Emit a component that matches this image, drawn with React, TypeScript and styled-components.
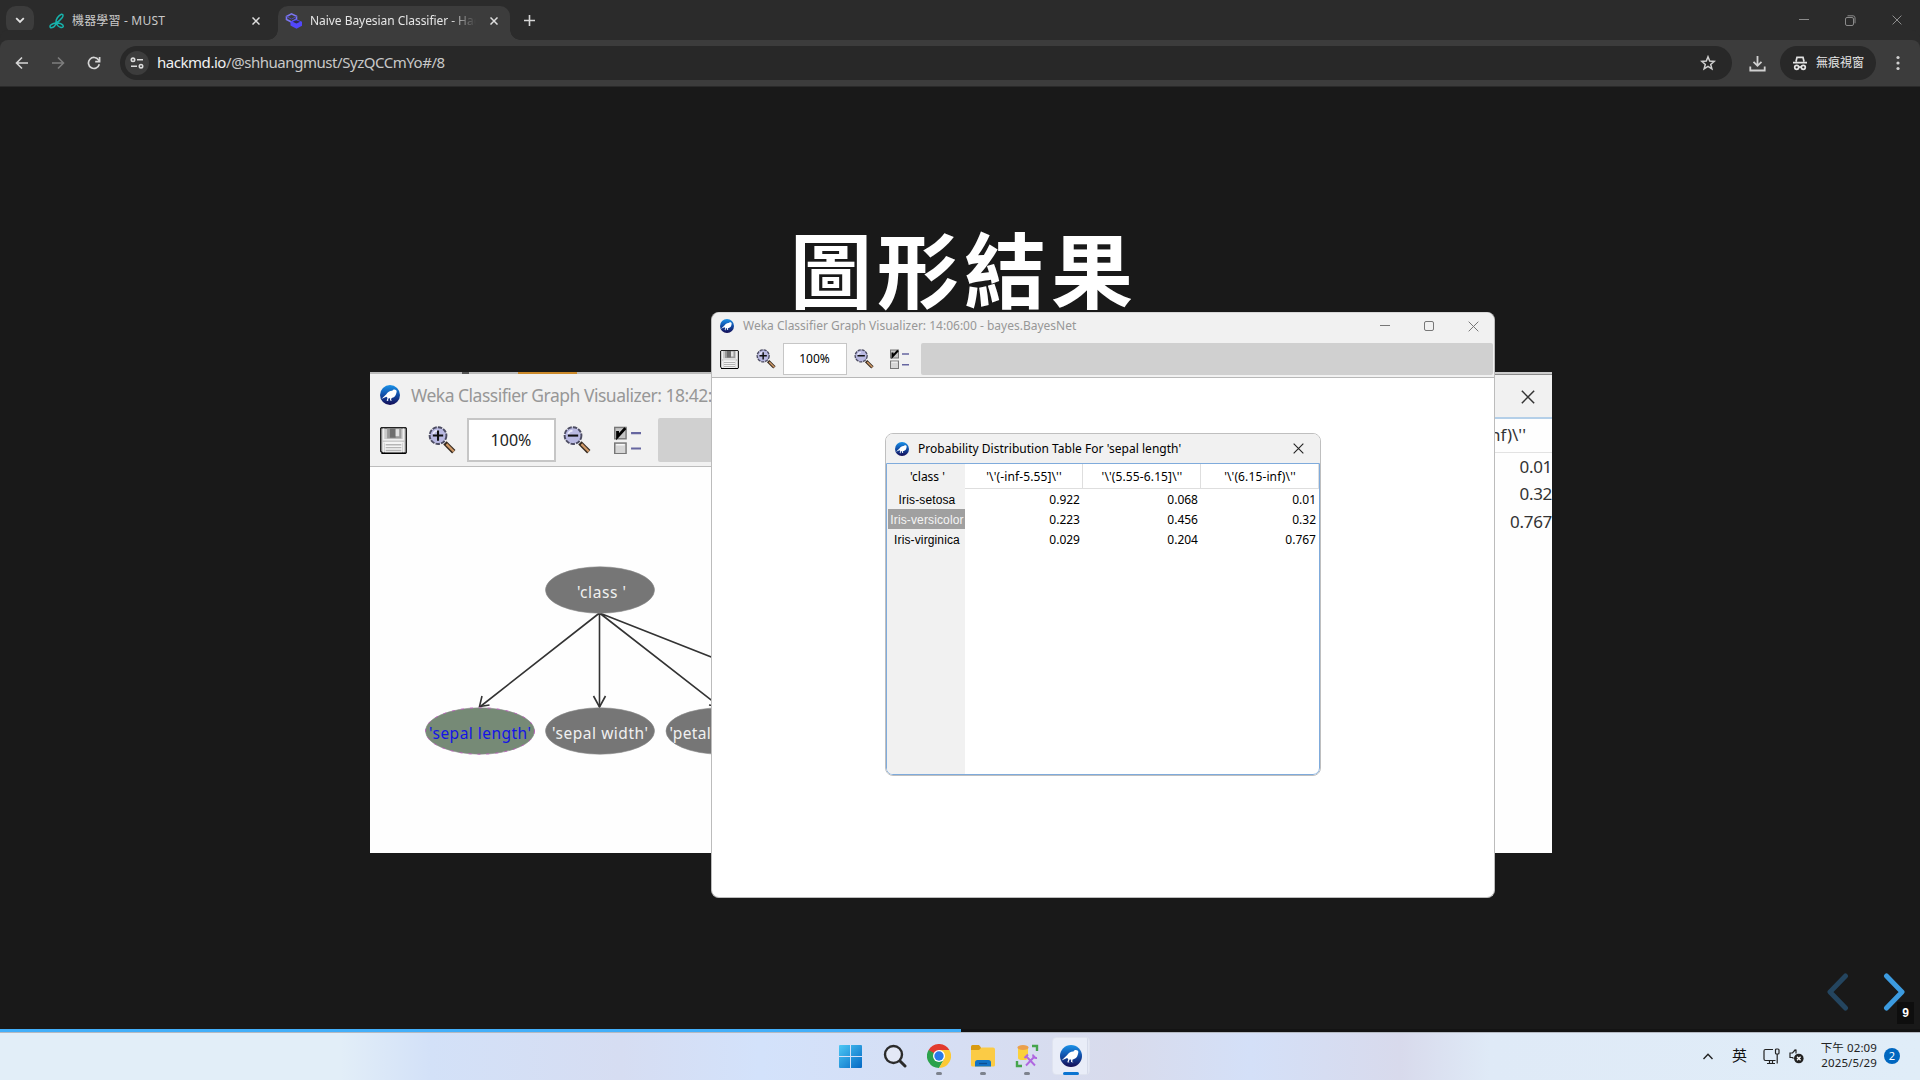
import React from "react";
import styled, { createGlobalStyle } from "styled-components";

const ui = `"Noto Sans", "Noto Sans CJK TC", sans-serif`;

const Global = createGlobalStyle`
  body { margin: 0; background: #191919; overflow: hidden; }
  * { box-sizing: border-box; }
  svg { display: block; flex: none; }
`;

const Screen = styled.div`
  position: relative;
  width: 1920px;
  height: 1080px;
  display: flex;
  flex-direction: column;
  overflow: hidden;
  font-family: ${ui};
`;

const Text = styled.span<{ $size: number; $color?: string; $ls?: number }>`
  font-size: ${(p) => p.$size}px;
  color: ${(p) => p.$color ?? "#000"};
  letter-spacing: ${(p) => p.$ls ?? 0}px;
  line-height: 1.3;
  white-space: pre;
`;

const Spacer = styled.div`
  flex: 1;
`;

/* ---------- browser chrome ---------- */
const TabStrip = styled.div`
  height: 40px;
  background: #2b2b2b;
  display: flex;
  align-items: center;
  padding: 0 18px 0 6px;
`;
const TabSearch = styled.div`
  width: 28px;
  height: 28px;
  border-radius: 10px;
  background: #3c3c3c;
  display: grid;
  place-items: center;
`;
const Tab = styled.div<{ $active?: boolean }>`
  position: relative;
  width: ${(p) => (p.$active ? 232 : 236)}px;
  height: 34px;
  margin-top: 6px;
  margin-left: ${(p) => (p.$active ? 0 : 8)}px;
  padding: 0 ${(p) => (p.$active ? 12 : 18)}px 5px 7px;
  border-radius: 10px 10px 0 0;
  background: ${(p) => (p.$active ? "#3c3c3c" : "transparent")};
  display: flex;
  align-items: center;
  &::before,
  &::after {
    content: "";
    display: ${(p) => (p.$active ? "block" : "none")};
    position: absolute;
    bottom: 0;
    width: 10px;
    height: 10px;
  }
  &::before {
    left: -10px;
    background: radial-gradient(circle at 0 0, transparent 9.5px, #3c3c3c 10px);
  }
  &::after {
    right: -10px;
    background: radial-gradient(circle at 100% 0, transparent 9.5px, #3c3c3c 10px);
  }
`;
const TabTitle = styled.div<{ $fade?: boolean }>`
  flex: 1;
  overflow: hidden;
  display: flex;
  margin: 0 ${(p) => (p.$fade ? 14 : 10)}px 0 7px;
  mask-image: ${(p) => (p.$fade ? "linear-gradient(90deg,#000 84%,transparent)" : "none")};
`;
const NewTab = styled.div`
  margin-left: 14px;
`;
const WindowButtons = styled.div<{ $gap: number; $shift?: number }>`
  display: flex;
  gap: ${(p) => p.$gap}px;
  align-items: center;
  margin-right: ${(p) => p.$shift ?? 0}px;
`;
const Toolbar = styled.div`
  height: 47px;
  background: #3c3c3c;
  border-bottom: 1px solid #2a2a2a;
  border-radius: 8px 8px 0 0;
  box-shadow: 0 -10px 0 #2b2b2b;
  display: flex;
  align-items: center;
  padding: 0 14px 0 15px;
`;
const NavIcons = styled.div`
  width: 105px;
  display: flex;
  gap: 22px;
`;
const Omnibox = styled.div`
  width: 1613px;
  height: 34px;
  border-radius: 17px;
  background: #282828;
  display: flex;
  align-items: center;
  padding: 0 16px 0 5px;
`;
const SiteInfo = styled.div`
  width: 24px;
  height: 24px;
  border-radius: 50%;
  background: #3c3c3c;
  display: grid;
  place-items: center;
  margin-right: 8px;
`;
const Download = styled.svg`
  margin-left: 17px;
`;
const Incognito = styled.div`
  width: 96px;
  height: 34px;
  border-radius: 17px;
  background: #282828;
  display: flex;
  align-items: center;
  gap: 8px;
  padding-left: 12px;
  margin: 0 14px 0 14px;
`;

/* ---------- slide ---------- */
const Page = styled.main`
  position: relative;
  height: 942px;
  background: #191919;
  display: flex;
  flex-direction: column;
  align-items: center;
`;
const Heading = styled.h1`
  margin: 125px 0 0 8px;
  height: 160px;
  font: 700 82px/110px "Noto Sans CJK TC", sans-serif;
  letter-spacing: 5px;
  color: #fff;
`;
const Slide = styled.div`
  width: 1182px;
  height: 481px;
  background: #fefefe;
  margin-left: 2px;
  display: flex;
  justify-content: space-between;
  overflow: hidden;
`;
const SlideLeft = styled.div`
  width: 346px;
`;
const SlideEdge = styled.div`
  height: 2px;
  background: linear-gradient(90deg, #bbb 92px, #555 92px 99px, #bbb 99px 148px, #cc8a2b 148px 207px, #bbb 207px);
`;
const SlideTitle = styled.div`
  height: 42px;
  background: #f1f1f1;
  display: flex;
  align-items: center;
  padding-left: 10px;
  gap: 11px;
`;
const SlideTools = styled.div`
  height: 51px;
  background: #f1f1f1;
  border-bottom: 1px solid #bdbdbd;
  display: flex;
  align-items: flex-start;
  padding: 2px 0 0 10px;
`;
const ZoomField = styled.div<{ $w: number; $h: number }>`
  width: ${(p) => p.$w}px;
  height: ${(p) => p.$h}px;
  padding-right: 1px;
  background: #fff;
  border: ${(p) => (p.$h > 40 ? 2 : 1)}px solid #c6c6c6;
  display: grid;
  place-items: center;
`;
const ToolSlot = styled.div<{ $w: number; $h: number; $pad?: number }>`
  width: ${(p) => p.$w}px;
  height: ${(p) => p.$h}px;
  padding-left: ${(p) => p.$pad ?? 0}px;
  display: flex;
  align-items: center;
`;
const GrayBar = styled.div<{ $h: number }>`
  flex: 1;
  height: ${(p) => p.$h}px;
  background: #d0d0d0;
  border-radius: 2px;
`;
const SlideRight = styled.div`
  width: 60px;
`;
const RightTitle = styled.div`
  height: 47px;
  border-top: 2px solid #ccc;
  background: linear-gradient(#8a8a8a 1px, #f1f1f1 1px);
  border-bottom: 2px solid #b4cfe8;
  display: flex;
  align-items: center;
  padding: 2px 0 0 29px;
`;
const RightHead = styled.div`
  height: 34px;
  border-bottom: 1px solid #e2e2e2;
  display: flex;
  align-items: center;
  justify-content: flex-end;
  padding-right: 26px;
`;
const RightRow = styled.div`
  height: 27.5px;
  display: flex;
  align-items: center;
  justify-content: flex-end;
`;

const SlideNav = styled.div`
  position: absolute;
  right: 15px;
  bottom: 18px;
  display: flex;
  gap: 34px;
`;
const PageNumber = styled.div`
  position: absolute;
  right: 6px;
  bottom: 5px;
  width: 17px;
  height: 22px;
  background: #0e0e0e;
  color: #fff;
  font: 700 12px/22px "Liberation Sans", sans-serif;
  text-align: center;
`;
const Progress = styled.div`
  height: 3px;
  background: #131313;
  &::before {
    content: "";
    display: block;
    width: 961px;
    height: 3px;
    background: #42affa;
  }
`;

/* ---------- windows over the page ---------- */
const AppWindow = styled.section`
  position: absolute;
  left: 711px;
  top: 312px;
  width: 784px;
  height: 586px;
  border: 1px solid #bcbcbc;
  border-top-color: #d8d8d8;
  border-radius: 8px;
  background: #fff;
  overflow: hidden;
`;
const AppTitle = styled.header`
  height: 29px;
  background: #f1f1f1;
  display: flex;
  align-items: center;
  gap: 9px;
  padding: 0 16px 3px 8px;
`;
const AppTools = styled.div`
  height: 36px;
  background: #f1f1f1;
  border-bottom: 1px solid #b8b8b8;
  display: flex;
  padding: 1px 1px 0 8px;
`;
const Dialog = styled.section`
  position: absolute;
  left: 885px;
  top: 433px;
  width: 436px;
  height: 343px;
  border: 1px solid #bfbfbf;
  border-radius: 8px;
  background: #fff;
  overflow: hidden;
  display: flex;
  flex-direction: column;
`;
const DialogTitle = styled.header`
  height: 29px;
  background: #f1f1f1;
  display: flex;
  align-items: center;
  padding: 0 16px 0 9px;
  gap: 9px;
`;
const TableBox = styled.div`
  flex: 1;
  border: 1px solid #7fabdc;
  border-radius: 0 0 7px 7px;
  display: flex;
  overflow: hidden;
`;
const RowHeads = styled.div`
  width: 78px;
  background: #f1f1f1;
  display: flex;
  flex-direction: column;
`;
const CornerCell = styled.div`
  height: 25px;
  padding-left: 3px;
  display: grid;
  place-items: center;
`;
const RowHead = styled.div<{ $on?: boolean }>`
  height: 20px;
  margin-left: 1px;
  padding-left: 1px;
  background: ${(p) => (p.$on ? "#a0a0a0" : "transparent")};
  color: ${(p) => (p.$on ? "#f4f4f4" : "#000")};
  font: 12px/22px "Liberation Sans", sans-serif;
  letter-spacing: 0.13px;
  text-align: center;
  white-space: nowrap;
`;
const Column = styled.div<{ $last?: boolean }>`
  flex: ${(p) => (p.$last ? "1" : "0 0 118px")};
  display: flex;
  flex-direction: column;
`;
const ColumnHead = styled.div`
  height: 25px;
  padding: 2px 0 0 1px;
  border-right: 1px solid #dedede;
  border-bottom: 1px solid #dedede;
  display: grid;
  place-items: center;
`;
const Cell = styled.div`
  height: 20px;
  display: flex;
  align-items: center;
  justify-content: flex-end;
  padding: 2px 3px 0 0;
`;

/* ---------- taskbar ---------- */
const Taskbar = styled.footer`
  height: 48px;
  border-top: 1px solid #b4b9c2;
  background: linear-gradient(90deg, #e2eef8 0, #e2eef8 340px, #d3e1f8 430px, #d6ddf2 620px, #d3e2fb 760px, #d6def3 960px, #d8dbec 1120px, #d4e0f8 1250px, #d8daec 1400px, #dfeaf7 1490px, #e0edf8 100%);
  display: flex;
  align-items: stretch;
`;
const Apps = styled.div`
  display: flex;
  margin-left: 829px;
`;
const AppButton = styled.div<{ $state?: "idle" | "open" | "active" }>`
  position: relative;
  width: 44px;
  padding-bottom: 1px;
  display: flex;
  justify-content: center;
  align-items: center;
  &::after {
    content: "";
    display: ${(p) => (p.$state && p.$state !== "idle" ? "block" : "none")};
    position: absolute;
    bottom: 5px;
    width: ${(p) => (p.$state === "active" ? 16 : 6)}px;
    height: 3px;
    border-radius: 2px;
    background: ${(p) => (p.$state === "active" ? "#0a74d1" : "#7d828d")};
  }
`;
const ActiveTile = styled.div`
  width: 38px;
  height: 38px;
  border-radius: 4px;
  background: linear-gradient(90deg, #e9edf8 34px, #d6dbea 34px 35px, #e4e8f5 35px);
  border: 1px solid #dfe3ef;
  display: grid;
  place-items: center;
`;
const Tray = styled.div`
  display: flex;
  align-items: center;
  padding: 0 20px 1px 0;
`;
const TrayIcon = styled.svg<{ $l?: number; $r?: number }>`
  margin-left: ${(p) => p.$l ?? 0}px;
  margin-right: ${(p) => p.$r ?? 0}px;
`;
const Clock = styled.div`
  width: 68px;
  margin: 0 7px 0 5px;
  display: flex;
  flex-direction: column;
  align-items: flex-end;
`;
const Badge = styled.div`
  width: 16px;
  height: 16px;
  border-radius: 50%;
  background: #0067c0;
  color: #fff;
  font: 11px/16px ${ui};
  text-align: center;
`;

/* ---------- drawings ---------- */
type IconProps = { size?: number; color?: string };

const Cross = ({ size = 10, color = "#dedede", w = 1.5 }: IconProps & { w?: number }) => (
  <svg width={size} height={size} viewBox="0 0 10 10" stroke={color} strokeWidth={(w * 10) / size} fill="none">
    <path d="M.6.6 9.4 9.4M9.4.6.6 9.4" />
  </svg>
);
const Minus = ({ color = "#8a8a8a" }: IconProps) => (
  <svg width="10" height="10" stroke={color} fill="none">
    <path d="M0 4.5h10" />
  </svg>
);
const Square = ({ color = "#777" }: IconProps) => (
  <svg width="10" height="10" stroke={color} fill="none">
    <rect x=".5" y=".5" width="9" height="9" rx="1.5" />
  </svg>
);
const Restore = () => (
  <svg width="11" height="11" stroke="#8a8a8a" fill="none">
    <rect x=".5" y="2.5" width="8" height="8" rx="1.5" />
    <path d="M2.5.8H8a2 2 0 0 1 2 2v5.5" />
  </svg>
);

const Weka = ({ size = 14 }: IconProps) => (
  <svg width={size} height={size} viewBox="0 0 22 22">
    <defs>
      <linearGradient id="weka" x1="0" y1="0" x2="0" y2="1">
        <stop offset="0" stopColor="#1a92e8" />
        <stop offset=".45" stopColor="#1254ae" />
        <stop offset="1" stopColor="#140c55" />
      </linearGradient>
    </defs>
    <circle cx="11" cy="11" r="11" fill="url(#weka)" />
    <path d="M1.5 15.5 7 10.2C8.500 7.600 11 6.200 13.500 6.400c.8-1.400 2.800-1.900 4-.8.9.7 1 1.500.7 2.500-.4 1.500-.6 3.200-1.800 4.400-1.100 1.200-2.600 1.700-3.800 2l-.4 2 1.300.9-2.500-.3.100-2.500-1.500-.1-.9 2.200.9.900-2.300-.4 1-3-1.200-1.300z" fill="#fff" />
  </svg>
);

const Floppy = ({ size = 19 }: IconProps) => (
  <svg width={size} height={size} viewBox="0 0 19 19">
    <path d="M1 .5h17l.5.5v17l-.5.5H2L.5 17V1z" fill="#c9c9c9" stroke="#222" />
    <rect x="5" y="1" width="10" height="7" fill="#999" />
    <rect x="7" y="1" width="4" height="6.500" fill="#6d6d6d" />
    <rect x="11" y="1.500" width="2.500" height="5" fill="#e0e0e0" />
    <path d="M2.500 1v8h14V1M2.500 18v-7h14v7" fill="none" stroke="#eee" />
    <rect x="3.500" y="10.500" width="12" height="7.500" fill="#f4f4f4" />
    <path d="M4 12.500h11M4 14.500h11M4 16.500h11" stroke="#b5b5b5" />
    <path d="M1 18.500h17" stroke="#000" />
  </svg>
);
const Lens = ({ size = 20, plus }: IconProps & { plus?: boolean }) => (
  <svg width={size} height={size} viewBox="0 0 19 19" fill="none">
    <path d="m11.500 11.500 6 6" stroke="#35291f" strokeWidth="3.200" />
    <path d="m12.500 12.300 5 5" stroke="#d09a68" strokeWidth="1.500" />
    <circle cx="6.800" cy="6.500" r="5.700" fill="#b9b9e2" stroke="#4c4c62" strokeWidth="1.300" strokeDasharray="3 .8" />
    <path d="M3.500 5.500c.4-1.500 1.500-2.200 3-2.300" stroke="#e9e9fb" strokeWidth="1.200" />
    <path d={plus ? "M3.300 6.500h7M6.800 3v7" : "M3.300 6.500h7"} stroke="#111" strokeWidth="1.400" />
  </svg>
);
const CheckList = ({ size = 19 }: IconProps) => (
  <svg width={size} height={(size * 20) / 19} viewBox="0 0 19 20" fill="none">
    <rect x=".5" y="1" width="8" height="8" fill="#c4c4c4" stroke="#777" />
    <path d="M2.500 3.500v4l5.500-6" stroke="#000" strokeWidth="2" />
    <rect x=".5" y="12" width="8" height="7.500" fill="#d6d6d6" stroke="#777" />
    <path d="M1.500 13.200h6" stroke="#f7f7f7" />
    <path d="M12 5h7M12 15.800h7" stroke="#6666a0" strokeWidth="1.500" />
  </svg>
);

const Graph = () => (
  <svg width="346" height="386" viewBox="370 467 346 386">
    <g stroke="#333" strokeWidth="1.600" fill="none">
      <path d="M599.500 613 481 706M599.500 613v94M599.500 613 719 706M599.500 613 838 707" />
      <path d="m482 696-2.500 10.500 10-1.500M593.500 696l6 11 6-11M709 705l10 1.500-3-10" />
    </g>
    <g fill="#767676" stroke="#8a8a8a" strokeWidth=".6">
      <ellipse cx="600" cy="590" rx="54.500" ry="23.200" />
      <ellipse cx="600" cy="731" rx="54.500" ry="23.200" />
      <ellipse cx="720.500" cy="731" rx="54.500" ry="23.200" />
      <ellipse cx="480" cy="731" rx="54.500" ry="23.200" fill="#768a76" />
      <ellipse cx="480" cy="731" rx="54.500" ry="23.200" fill="none" stroke="#c050c0" strokeWidth=".8" strokeDasharray="3 6" />
    </g>
    <g fontFamily={ui} fontSize="15.500" fill="#f0f0f0">
      <text x="577" y="598" textLength="49">'class '</text>
      <text x="552" y="738.500" textLength="96">'sepal width'</text>
      <text x="669.500" y="738.500" textLength="98">'petal length'</text>
      <text x="429" y="738.500" fill="#1414e6" textLength="102">'sepal length'</text>
    </g>
  </svg>
);

const Back = ({ flip, color = "#d6d6d6" }: IconProps & { flip?: boolean }) => (
  <svg width="14" height="14" viewBox="0 0 14 14" fill="none" stroke={color} strokeWidth="1.600">
    <path d={flip ? "M1 7h11M7 1.500 12.500 7 7 12.500" : "M13 7H2M7 1.500 1.500 7 7 12.500"} />
  </svg>
);
const Reload = () => (
  <svg width="14" height="14" viewBox="0 0 14 14" fill="none" stroke="#d6d6d6" strokeWidth="1.700">
    <path d="M12.300 8.300A5.500 5.500 0 1 1 11.600 4l.9 1.300" />
    <path d="M12.600 1v4.600H8.200" />
  </svg>
);

const columns = [
  { head: "'\\'(-inf-5.55]\\''", cells: ["0.922", "0.223", "0.029"] },
  { head: "'\\'(5.55-6.15]\\''", cells: ["0.068", "0.456", "0.204"] },
  { head: "'\\'(6.15-inf)\\''", cells: ["0.01", "0.32", "0.767"] },
];
const rows = ["Iris-setosa", "Iris-versicolor", "Iris-virginica"];

const BrowserChrome = () => (
  <>
    <TabStrip>
      <TabSearch>
        <svg width="10" height="7" fill="none" stroke="#e3e3e3" strokeWidth="1.800">
          <path d="m1.200 1.200 3.800 3.800 3.800-3.800" />
        </svg>
      </TabSearch>
      <Tab>
        <svg width="16" height="16" viewBox="0 0 16 16" fill="none" stroke="#17b3ac" strokeWidth="1.500">
          <path d="M7 10C6.300 6.500 9.500 2.500 12.500 1.300c2-.3 1.800 2 .6 3.500C11 7.500 9.500 9 7 10zM7 10c-.5 2.500-2.500 4.500-4.700 4.700-1.800 0-1.600-2-.1-3C3.500 10.700 5.200 10 7 10zM7 10c2.500-.2 5.500.4 7 2.300.8 1.400-.4 2.600-2 2.200C9.700 14 8 12 7 10z" />
        </svg>
        <TabTitle>
          <Text $size={12} $color="#c9c9c9" $ls={0.18}>機器學習 - MUST</Text>
        </TabTitle>
        <Cross size={8} />
      </Tab>
      <Tab $active>
        <svg width="18" height="18" viewBox="0 0 18 18">
          <path d="M1.500 4.500 6.500 1.800 11.500 4.300v3L6.500 10 1.500 7.500z" fill="none" stroke="#7a75ee" strokeWidth="1.600" />
          <path d="m1.500 4.500 5 2.500 5-2.500" fill="none" stroke="#4a45b8" />
          <path d="M5.500 9.500 11 7.300l6 2.500v4L11.500 16.800 5.500 13.500z" fill="#5247fb" />
          <path d="m7.600 9.800 3.600-1.500 4 1.500-3.800 1.700z" fill="#2d2b4a" />
        </svg>
        <TabTitle $fade>
          <Text $size={12} $color="#e6e6e6" $ls={-0.05}>Naive Bayesian Classifier - HackMD</Text>
        </TabTitle>
        <Cross size={8} />
      </Tab>
      <NewTab>
        <svg width="11" height="11" stroke="#d6d6d6" strokeWidth="1.600">
          <path d="M5.500 0v11M0 5.500h11" />
        </svg>
      </NewTab>
      <Spacer />
      <WindowButtons $gap={36}>
        <Minus />
        <Restore />
        <Cross size={10} w={1} color="#8f8f8f" />
      </WindowButtons>
    </TabStrip>
    <Toolbar>
      <NavIcons>
        <Back />
        <Back flip color="#7d7d7d" />
        <Reload />
      </NavIcons>
      <Omnibox>
        <SiteInfo>
          <svg width="14" height="12" viewBox="0 0 14 12" fill="none" stroke="#dcdcdc" strokeWidth="1.600">
            <circle cx="3" cy="2.800" r="1.700" />
            <path d="M7 2.800h6M1 9.200h6" />
            <circle cx="11" cy="9.200" r="1.700" />
          </svg>
        </SiteInfo>
        <Text $size={15} $color="#f1f1f1" $ls={-0.45}>hackmd.io</Text>
        <Text $size={15} $color="#c8c8c8" $ls={-0.45}>/@shhuangmust/SyzQCCmYo#/8</Text>
        <Spacer />
        <svg width="16" height="16" viewBox="0 0 16 16" fill="none" stroke="#cfcfcf" strokeWidth="1.500">
          <path d="m8 1.800 1.700 4.300 4.500.3-3.500 3 1.200 4.500L8 11.400l-3.900 2.500 1.200-4.500-3.500-3 4.500-.3z" />
        </svg>
      </Omnibox>
      <Download width="17" height="17" viewBox="0 0 17 17" fill="none" stroke="#d0d0d0" strokeWidth="1.800">
        <path d="M8.500 1v9.500M4.500 6.800l4 4 4-4M1.300 11.500v4h14.400v-4" />
      </Download>
      <Incognito>
        <svg width="16" height="15" viewBox="0 0 16 15" fill="none" stroke="#e3e3e3" strokeWidth="1.700">
          <path d="M4 5.500 5 1.300h6l1 4.200M1 6.600h14" />
          <circle cx="4.700" cy="11.300" r="2" />
          <circle cx="11.300" cy="11.300" r="2" />
          <path d="M6.700 11h2.600" />
        </svg>
        <Text $size={12} $color="#e6e6e6">無痕視窗</Text>
      </Incognito>
      <svg width="16" height="16" fill="#d0d0d0">
        <circle cx="8" cy="2.500" r="1.600" />
        <circle cx="8" cy="8" r="1.600" />
        <circle cx="8" cy="13.500" r="1.600" />
      </svg>
    </Toolbar>
  </>
);

const SlideView = () => (
  <Page>
    <Heading>圖形結果</Heading>
    <Slide>
      <SlideLeft>
        <SlideEdge />
        <SlideTitle>
          <Weka size={20} />
          <Text $size={17.5} $color="#979797" $ls={-0.5}>Weka Classifier Graph Visualizer: 18:42:</Text>
        </SlideTitle>
        <SlideTools>
          <ToolSlot $w={48} $h={44}><Floppy size={27} /></ToolSlot>
          <ToolSlot $w={39} $h={44}><Lens size={28} plus /></ToolSlot>
          <ZoomField $w={89} $h={44}><Text $size={16} $color="#222">100%</Text></ZoomField>
          <ToolSlot $w={58} $h={44} $pad={7}><Lens size={28} /></ToolSlot>
          <ToolSlot $w={44} $h={44}><CheckList size={27} /></ToolSlot>
          <GrayBar $h={44} />
        </SlideTools>
        <Graph />
      </SlideLeft>
      <SlideRight>
        <RightTitle><Cross size={14} w={1.5} color="#333" /></RightTitle>
        <RightHead><Text $size={17} $color="#333">{"nf)\\''"}</Text></RightHead>
        {columns[2].cells.map((v) => (
          <RightRow key={v}><Text $size={17} $color="#333" $ls={-0.3}>{v}</Text></RightRow>
        ))}
      </SlideRight>
    </Slide>
    <SlideNav>
      <svg width="22" height="38" fill="none" stroke="#24455f" strokeWidth="5" strokeLinecap="round" strokeLinejoin="round">
        <path d="M18.500 3 3 19l15.500 16" />
      </svg>
      <svg width="22" height="38" fill="none" stroke="#3c9be0" strokeWidth="5" strokeLinecap="round" strokeLinejoin="round">
        <path d="M3.500 3 19 19 3.500 35" />
      </svg>
    </SlideNav>
    <PageNumber>9</PageNumber>
  </Page>
);

const WekaWindow = () => (
  <AppWindow>
    <AppTitle>
      <Weka size={14} />
      <Text $size={12} $color="#979797">Weka Classifier Graph Visualizer: 14:06:00 - bayes.BayesNet</Text>
      <Spacer />
      <WindowButtons $gap={34} $shift={-1}>
        <Minus color="#777" />
        <Square />
        <Cross size={11} w={1} color="#777" />
      </WindowButtons>
    </AppTitle>
    <AppTools>
      <ToolSlot $w={36} $h={32}><Floppy /></ToolSlot>
      <ToolSlot $w={27} $h={32}><Lens plus /></ToolSlot>
      <ZoomField $w={64} $h={32}><Text $size={12}>100%</Text></ZoomField>
      <ToolSlot $w={43} $h={32} $pad={7}><Lens /></ToolSlot>
      <ToolSlot $w={31} $h={32}><CheckList /></ToolSlot>
      <GrayBar $h={32} />
    </AppTools>
  </AppWindow>
);

const TableDialog = () => (
  <Dialog>
    <DialogTitle>
      <Weka size={14} />
      <Text $size={12} $ls={0.02}>Probability Distribution Table For 'sepal length'</Text>
      <Spacer />
      <Cross size={11} w={1.1} color="#222" />
    </DialogTitle>
    <TableBox>
      <RowHeads>
        <CornerCell><Text $size={12}>'class '</Text></CornerCell>
        {rows.map((r, i) => (
          <RowHead key={r} $on={i === 1}>{r}</RowHead>
        ))}
      </RowHeads>
      {columns.map((c, i) => (
        <Column key={c.head} $last={i === 2}>
          <ColumnHead><Text $size={12} $ls={0.12}>{c.head}</Text></ColumnHead>
          {c.cells.map((v) => (
            <Cell key={v}><Text $size={12}>{v}</Text></Cell>
          ))}
        </Column>
      ))}
    </TableBox>
  </Dialog>
);

const TaskbarView = () => (
  <Taskbar>
    <Apps>
      <AppButton>
        <svg width="24" height="23">
          <defs>
            <linearGradient id="win" x1="0" y1="0" x2="1" y2="1">
              <stop offset="0" stopColor="#4cc8f5" />
              <stop offset="1" stopColor="#0468c4" />
            </linearGradient>
          </defs>
          <path d="M0 1q0-1 1-1h10v11H0zM12 0h10q1 0 1 1v10H12zM0 12h11v11H1q-1 0-1-1zM12 12h11v10q0 1-1 1H12z" fill="url(#win)" />
        </svg>
      </AppButton>
      <AppButton>
        <svg width="24" height="24" fill="none" stroke="#2b2b2b" strokeLinecap="round">
          <circle cx="10.500" cy="10.500" r="8.500" strokeWidth="2.400" fill="#e3e8f6" />
          <path d="m17 17 5 5" strokeWidth="3" />
        </svg>
      </AppButton>
      <AppButton $state="open">
        <svg width="24" height="24" viewBox="0 0 24 24">
          <path d="M1.600 6A12 12 0 0 0 12 24l5.200-9L12 12z" fill="#2ba24c" />
          <path d="M22.400 6A12 12 0 0 1 12 24l5.200-9L12 6z" fill="#fcc934" />
          <path d="M1.600 6A12 12 0 0 1 22.400 6H12v6H6.800z" fill="#e23b2e" />
          <path d="m1.600 6 5.200 9V9z" fill="#2ba24c" />
          <circle cx="12" cy="12" r="6" fill="#fff" />
          <circle cx="12" cy="12" r="4.700" fill="#2a79e8" />
        </svg>
      </AppButton>
      <AppButton $state="open">
        <svg width="24" height="22" viewBox="0 0 24 22">
          <path d="M0 1.500Q0 0 1.500 0H8l2 2.500V8H0z" fill="#d99a10" />
          <path d="M0 5h8l2.500-2.500H22q2 0 2 2V20q0 1.500-1.500 1.500h-21Q0 21.500 0 20z" fill="#fbcb45" />
          <path d="M4 21.500v-4q0-2.500 2.500-2.500h11q2.500 0 2.500 2.500v4z" fill="#1173c5" />
          <path d="M8 18.500h8" stroke="#0c4f92" strokeWidth="1.300" />
        </svg>
      </AppButton>
      <AppButton $state="open">
        <svg width="24" height="24" viewBox="0 0 24 24" fill="none">
          <path d="M3 4v10q0 2 5 2t5-2V4z" fill="#fbd13b" />
          <ellipse cx="8" cy="3.500" rx="5.500" ry="2.500" fill="#eba04c" />
          <path d="M17 2h5v5M2 17v5h5" stroke="#45a54c" strokeWidth="2.400" />
          <path d="m11 12 9 9.500M20 12l-9 9.500M9.500 14l3.500-3.500M18 10.500q0 4 4 3.500" stroke="#b067e0" strokeWidth="1.900" />
        </svg>
      </AppButton>
      <AppButton $state="active">
        <ActiveTile><Weka size={22} /></ActiveTile>
      </AppButton>
    </Apps>
    <Spacer />
    <Tray>
      <TrayIcon $r={19} width="10" height="7" fill="none" stroke="#222" strokeWidth="1.400">
        <path d="M.5 6 5 1.200 9.500 6" />
      </TrayIcon>
      <Text $size={15} $color="#111">英</Text>
      <TrayIcon $l={16} width="17" height="17" fill="none" stroke="#222" strokeWidth="1.200">
        <path d="M10 1.500H2.500q-1.500 0-1.500 1.500v8q0 1.500 1.500 1.500h10M4 15.500h8M6.500 12.500v3M9.500 12.500v3" />
        <rect x="12.500" y="1" width="3.500" height="5" rx="1" />
        <path d="M14.200 6v9.500" />
      </TrayIcon>
      <TrayIcon $l={9} width="15" height="16" fill="none" stroke="#222">
        <path d="M6.500 1.500 3.500 5H1v4.500h2.500l1 1M7 1.500v4" strokeWidth="1.200" />
        <circle cx="9.800" cy="10.500" r="4.800" fill="#222" stroke="none" />
        <path d="m8 8.700 3.600 3.600M11.600 8.700 8 12.300" stroke="#fff" strokeWidth="1.300" />
      </TrayIcon>
      <Clock>
        <Text $size={11.5} $color="#222" $ls={0.12}>下午 02:09</Text>
        <Text $size={11.5} $color="#222" $ls={0.12}>2025/5/29</Text>
      </Clock>
      <Badge>2</Badge>
    </Tray>
  </Taskbar>
);

export default function App() {
  return (
    <Screen>
      <Global />
      <BrowserChrome />
      <SlideView />
      <Progress />
      <TaskbarView />
      <WekaWindow />
      <TableDialog />
    </Screen>
  );
}
